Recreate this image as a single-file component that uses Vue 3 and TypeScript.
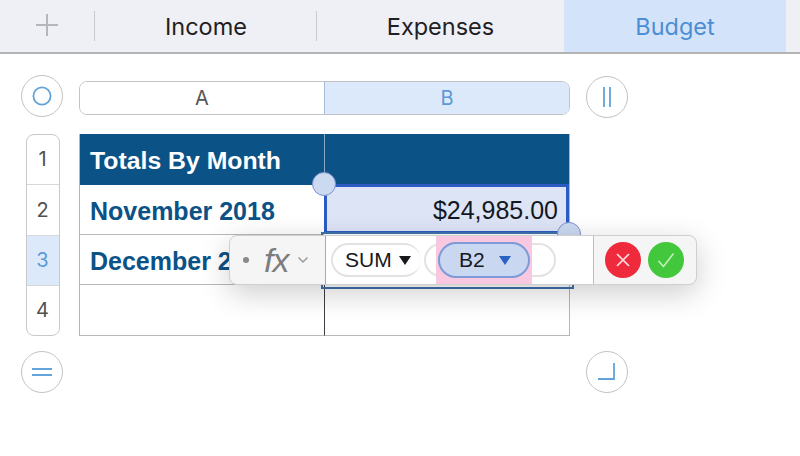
<template>
  <div class="app">
    <header class="tabs">
      <div class="tab-add">
        <svg width="26" height="26" viewBox="0 0 26 26"><path d="M13 2v22M2 13h22" stroke="#b4b6ba" stroke-width="2" fill="none" /></svg>
      </div>
      <div
        v-for="tab in tabs"
        :key="tab.name"
        :class="['tab', { 'tab-active': tab.active, 'tab-sep': tab.sep }]"
      >{{ tab.name }}</div>
      <div class="tab-rest"></div>
    </header>

    <main class="sheet">
      <button class="round-btn corner-tl">
        <svg width="20" height="20" viewBox="0 0 20 20"><circle cx="10" cy="10" r="8.6" stroke="#62a3d9" stroke-width="1.8" fill="none" /></svg>
      </button>
      <div class="col-heads">
        <div class="col-head">A</div>
        <div class="col-head col-head-on">B</div>
      </div>
      <button class="round-btn corner-tr">
        <svg width="20" height="24" viewBox="0 0 20 24"><path d="M7 2v20M13 2v20" stroke="#62a3d9" stroke-width="1.8" fill="none" /></svg>
      </button>

      <div class="row-heads">
        <div v-for="n in 4" :key="n" :class="['row-head', { 'row-head-on': n === 3 }]">{{ n }}</div>
      </div>

      <div class="table">
        <div class="cell cell-title">Totals By Month</div>
        <div class="cell cell-title cell-b"></div>
        <div class="cell cell-label">November 2018</div>
        <div class="cell cell-b cell-selected">$24,985.00</div>
        <div class="cell cell-label">December 2018</div>
        <div class="cell cell-b"></div>
        <div class="cell cell-last"></div>
        <div class="cell cell-b cell-last"></div>
      </div>

      <button class="round-btn corner-bl">
        <svg width="20" height="10" viewBox="0 0 20 10"><path d="M0 2h20M0 8h20" stroke="#62a3d9" stroke-width="1.800" fill="none" /></svg>
      </button>
      <button class="round-btn corner-br">
        <svg width="20" height="20" viewBox="0 0 20 20"><path d="M17 1v16H1" stroke="#62a3d9" stroke-width="1.800" fill="none" /></svg>
      </button>

      <!-- overlays on the grid -->
      <div class="ref-outline"></div>
      <div class="handle handle-a"></div>
      <div class="handle handle-b"></div>

      <div class="formula-bar">
        <div class="fb-left">
          <span class="fb-dot"></span>
          <span class="fb-fx">fx</span>
          <svg width="12" height="8" viewBox="0 0 12 8"><path d="M1.500 1.500 6 6l4.500-4.500" stroke="#9b9b9b" stroke-width="1.500" fill="none" /></svg>
        </div>
        <div class="fb-editor">
          <div class="token token-sum">SUM<i class="caret caret-dark"></i></div>
          <div class="token-paren"></div>
          <div class="token-mark">
            <div class="token token-ref">B2<i class="caret caret-blue"></i></div>
          </div>
        </div>
        <div class="fb-actions">
          <button class="fb-btn fb-cancel">
            <svg width="14" height="14" viewBox="0 0 14 14"><path d="M1 1l12 12M13 1 1 13" stroke="#ffdfe1" stroke-width="1.700" fill="none" /></svg>
          </button>
          <button class="fb-btn fb-ok">
            <svg width="18" height="16" viewBox="0 0 18 16"><path d="M1.500 9 6.500 14.500 16.500 1.500" stroke="#c4f0bc" stroke-width="1.600" fill="none" /></svg>
          </button>
        </div>
      </div>
    </main>
  </div>
</template>

<script setup lang="ts">
interface Tab {
  name: string;
  active?: boolean;
  sep?: boolean;
}

const tabs: Tab[] = [
  { name: 'Income', sep: true },
  { name: 'Expenses' },
  { name: 'Budget', active: true },
];
</script>

<style>
html, body { margin: 0; background: #fff; }
</style>

<style scoped>
.app {
  width: 800px;
  height: 456px;
  overflow: hidden;
  background: #fff;
  font-family: "Inter", "Liberation Sans", sans-serif;
}
.tabs {
  display: flex;
  height: 52px;
  background: #eff0f5;
  border-bottom: 2px solid #b3b3b5;
}
.tab-add {
  width: 95px;
  display: flex;
  align-items: center;
  justify-content: center;
  padding: 0 2px 2px 0;
  box-sizing: border-box;
  position: relative;
}
.tab-add::after, .tab-sep::after {
  content: '';
  position: absolute;
  right: 0;
  top: 11px;
  height: 30px;
  width: 1px;
  background: #c9cacd;
}
.tab {
  position: relative;
  width: 222px;
  display: flex;
  align-items: center;
  justify-content: center;
  font-size: 23.500px;
  color: #1f2023;
  padding-top: 1px;
  box-sizing: border-box;
}
.tab:nth-of-type(3) { width: 247px; }
.tab-active { background: #d3e4fa; color: #4c8ed3; }
.tab-rest { flex: 1; }

.sheet {
  display: grid;
  grid-template-columns: 21px 42px 16px 245px 246px 16px 42px;
  grid-template-rows: 21px 42px 17px 202px 15px 42px;
  position: relative;
}
.round-btn {
  width: 42px;
  height: 42px;
  box-sizing: border-box;
  padding: 0;
  border-radius: 50%;
  border: 1.500px solid #c3c3c3;
  background: #fff;
  display: flex;
  align-items: center;
  justify-content: center;
}
.corner-tl { grid-column: 2; grid-row: 2; }
.corner-tr { grid-column: 7; grid-row: 2; margin-top: 1px; }
.corner-bl { grid-column: 2; grid-row: 6; }
.corner-br { grid-column: 7; grid-row: 6; }
.col-heads {
  grid-column: 4 / 6;
  grid-row: 2;
  margin-top: 6px;
  height: 34px;
  display: grid;
  grid-template-columns: 244px 245px;
  box-sizing: border-box;
  border: 1px solid #c0c4c9;
  border-bottom-width: 1.500px;
  border-radius: 8px;
  overflow: hidden;
  font-size: 20px;
}
.col-head {
  display: flex;
  align-items: center;
  justify-content: center;
  color: #555;
  background: #fff;
}
.col-head-on {
  background: #dbe9fb;
  color: #5c9ad8;
  border-left: 1px solid #a9bdd4;
}
.row-heads {
  grid-column: 2;
  grid-row: 4;
  justify-self: center;
  margin-left: 1px;
  width: 34px;
  height: 202px;
  box-sizing: border-box;
  border: 1px solid #c6c9cd;
  border-bottom-width: 1.500px;
  border-radius: 8px;
  overflow: hidden;
  display: grid;
  grid-template-rows: 50px 51px 50px 1fr;
}
.row-head {
  display: flex;
  align-items: center;
  justify-content: center;
  font-size: 20px;
  color: #505050;
  border-bottom: 1px solid #d8d8d8;
  padding-bottom: 1px;
  box-sizing: border-box;
}
.row-head:last-child { border-bottom: 0; }
.row-head-on { background: #dbe9fb; color: #5c9ad8; }

.table {
  grid-column: 4 / 6;
  grid-row: 4;
  display: grid;
  grid-template-columns: 244px 245px;
  grid-template-rows: 51px 50px 50px 51px;
  box-sizing: border-box;
  border-left: 1px solid #b5b5b5;
  border-right: 1px solid #b5b5b5;
}
.cell {
  border-bottom: 1px solid #b9b9b9;
  box-sizing: border-box;
  display: flex;
  align-items: center;
  padding: 4px 11px 0 10px;
  font-family: "Liberation Sans", sans-serif;
  font-size: 25px;
  white-space: nowrap;
  overflow: hidden;
}
.cell-b { border-left: 1px solid #3a3f45; }
.cell-title {
  background: #0b5287;
  color: #fff;
  font-weight: 700;
  font-size: 24.800px;
  border-bottom: 0;
  padding-top: 3px;
}
.cell-title.cell-b { border-left-color: #8aa8c2; }
.cell-label { color: #0b5287; font-weight: 700; }
.cell-selected {
  justify-content: flex-end;
  margin: -1px 0 1px;
  background: #dde4f6;
  color: #14181f;
  outline: 3.500px solid #2a5cc4;
  outline-offset: -3.500px;
}
.ref-outline {
  position: absolute;
  left: 321px;
  top: 178px;
  width: 253px;
  height: 57px;
  box-sizing: border-box;
  border: 2px solid #3f72ad;
}
.handle {
  position: absolute;
  width: 24px;
  height: 24px;
  box-sizing: border-box;
  border-radius: 50%;
  background: #cbd9f1;
  border: 1.500px solid #7f8fd0;
}
.handle-a { left: 312px; top: 118px; }
.handle-b { left: 557px; top: 168px; }

.formula-bar {
  position: absolute;
  left: 229px;
  top: 181px;
  width: 468px;
  height: 50px;
  box-sizing: border-box;
  display: flex;
  background: #f5f5f5;
  border: 1px solid #cfcfcf;
  border-radius: 8px;
  box-shadow: 0 8px 30px rgba(0, 0, 0, 0.2);
}
.fb-left {
  width: 95px;
  flex-shrink: 0;
  display: flex;
  align-items: center;
  padding-left: 13px;
  box-sizing: border-box;
  color: #7d7d7d;
}
.fb-dot {
  width: 6px;
  height: 6px;
  border-radius: 50%;
  background: #8a8a8a;
  margin-right: 15px;
}
.fb-fx {
  font-family: "Liberation Sans", sans-serif;
  font-style: italic;
  font-size: 34px;
  margin-right: 9px;
  font-weight: 400;
  letter-spacing: -1px;
}
.fb-editor {
  width: 269px;
  flex-shrink: 0;
  box-sizing: border-box;
  background: #fff;
  border-left: 1px solid #a9a9a9;
  border-right: 1px solid #bdbdbd;
  display: flex;
  align-items: center;
  padding-left: 5px;
  position: relative;
}
.token {
  display: flex;
  align-items: center;
  box-sizing: border-box;
  font-family: "Liberation Sans", sans-serif;
  font-size: 21px;
  color: #16181c;
  border-radius: 18px;
}
.token-sum {
  width: 90px;
  height: 34px;
  padding-left: 12px;
  border: 2px solid #e2e2e2;
  border-right: 0;
  gap: 7px;
}
.token-paren {
  width: 132px;
  height: 34px;
  margin-left: 3px;
  box-sizing: border-box;
  border: 2px solid #e2e2e2;
  border-radius: 18px;
}
.token-mark {
  position: absolute;
  left: 110px;
  top: 0;
  width: 96px;
  height: 48px;
  background: #f8c8e0;
  display: flex;
  align-items: center;
  justify-content: center;
}
.token-ref {
  width: 92px;
  height: 36px;
  padding-left: 19px;
  gap: 14px;
  background: #c9d7f1;
  border: 2px solid #7d9bd9;
}
.caret {
  width: 0;
  height: 0;
  border-left: 6.500px solid transparent;
  border-right: 6.500px solid transparent;
}
.caret-dark { border-top: 9px solid #16181c; }
.caret-blue { border-top: 9px solid #2a62c4; }
.fb-actions {
  flex: 1;
  display: flex;
  align-items: center;
  gap: 7px;
  padding-left: 11px;
}
.fb-btn {
  width: 36px;
  height: 36px;
  padding: 0;
  border: 0;
  border-radius: 50%;
  display: flex;
  align-items: center;
  justify-content: center;
}
.fb-cancel { background: #ee2a3c; }
.fb-ok { background: #43c83d; }
</style>
